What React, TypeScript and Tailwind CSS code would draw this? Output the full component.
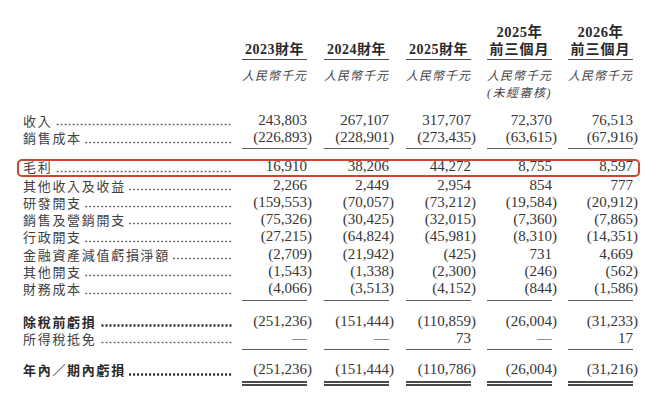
import React from "react";

const serif = "font-['Liberation_Serif','Noto_Sans_CJK_TC',serif]";
const cjk = "font-['Noto_Sans_CJK_TC','Noto_Sans_CJK_SC',sans-serif]";

const colCls = [
  "w-[65px]",
  "ml-[17px] w-[65px]",
  "ml-[17px] w-[65px]",
  "ml-[16px] w-[65px]",
  "ml-[16px] w-[65px]",
];

function Val({ v }: { v: string }) {
  if (v.endsWith(")")) {
    return (
      <>
        {v.slice(0, -1)}
        <span className="inline-block w-0">)</span>
      </>
    );
  }
  return <>{v}</>;
}

type RowProps = {
  label: string;
  vals: string[];
  bold?: boolean;
  line?: "single" | "double";
  pb?: string;
  className?: string;
};

function Row({ label, vals, bold, line, pb = "pb-[2px]", className = "" }: RowProps) {
  const lineCls =
    line === "single"
      ? `border-b border-[#5c5c5c] ${pb}`
      : line === "double"
      ? `border-b-[5px] border-double border-[#4a4a4a] ${pb}`
      : "";
  return (
    <div className={`flex items-start leading-[17.3px] ${className}`}>
      <div className="flex w-[219px] shrink-0 pr-[10px] h-[17.3px]">
        <span
          className={`${cjk} text-[13px] tracking-[1.7px] whitespace-nowrap ${
            bold ? "font-bold text-[#2a2a2a]" : "text-[#404040]"
          }`}
        >
          {label}
        </span>
        <div
          className={`flex-1 ml-[3px] self-end mb-[3px] h-[3px] bg-repeat-x bg-right bg-[length:4px_3px] ${
            bold
              ? "bg-[radial-gradient(circle,#2a2a2a_1px,transparent_1.4px)]"
              : "bg-[radial-gradient(circle,#666_0.8px,transparent_1.2px)]"
          }`}
        />
      </div>
      {vals.map((v, i) => (
        <div
          key={i}
          className={`${colCls[i]} shrink-0 text-right ${serif} text-[15px] text-[#363636] whitespace-nowrap ${lineCls}`}
        >
          <Val v={v} />
        </div>
      ))}
    </div>
  );
}

export default function App() {
  return (
    <div className="w-[666px] h-[414px] bg-white overflow-hidden">
      <div className="w-[633px] pl-[23px] pt-[23px]">
        {/* Header line A */}
        <div className="flex h-[18px] leading-[18px]">
          <div className="w-[219px] shrink-0" />
          {["", "", "", "2025年", "2026年"].map((t, i) => (
            <div
              key={i}
              className={`${colCls[i]} shrink-0 text-center whitespace-nowrap ${serif} font-bold text-[14.5px] text-[#2a2a2a] tracking-[0.5px]`}
            >
              {t}
            </div>
          ))}
        </div>
        {/* Header line B */}
        <div className="flex leading-[18px]">
          <div className="w-[219px] shrink-0" />
          {["2023財年", "2024財年", "2025財年", "前三個月", "前三個月"].map((t, i) => (
            <div
              key={i}
              className={`${colCls[i]} shrink-0 h-[19px] text-center whitespace-nowrap ${serif} font-bold text-[14px] text-[#2a2a2a] border-b border-[#4a4a4a] ${
                i >= 3 ? "tracking-[1px]" : "tracking-[0.5px]"
              }`}
            >
              {t}
            </div>
          ))}
        </div>
        {/* Header line C */}
        <div className="flex mt-[6px] h-[17px] leading-[17px]">
          <div className="w-[219px] shrink-0" />
          {[0, 1, 2, 3, 4].map((i) => (
            <div
              key={i}
              className={`${colCls[i]} shrink-0 text-center whitespace-nowrap ${cjk} italic text-[12px] tracking-[1px] text-[#444]`}
            >
              人民幣千元
            </div>
          ))}
        </div>
        {/* Header line D */}
        <div className="flex mt-[1px] h-[18px] leading-[18px]">
          <div className="w-[219px] shrink-0" />
          {["", "", "", "(未經審核)", ""].map((t, i) => (
            <div
              key={i}
              className={`${colCls[i]} shrink-0 text-center whitespace-nowrap ${serif} italic text-[12px] tracking-[1.5px] text-[#444]`}
            >
              {t}
            </div>
          ))}
        </div>

        {/* Body */}
        <div className="mt-[10px]">
          <Row label="收入" vals={["243,803", "267,107", "317,707", "72,370", "76,513"]} />
          <Row
            label="銷售成本"
            vals={["(226,893)", "(228,901)", "(273,435)", "(63,615)", "(67,916)"]}
            line="single"
            pb="pb-[1px]"
          />
          <div className="-ml-[6px] -mr-[7px] mt-[10px] border-2 border-[#c9472c] rounded-[5px] pl-[4px] pr-[5px] h-[18px] flex items-center">
            <Row
              label="毛利"
              vals={["16,910", "38,206", "44,272", "8,755", "8,597"]}
              className="-mt-[1px]"
            />
          </div>
          <Row label="其他收入及收益" vals={["2,266", "2,449", "2,954", "854", "777"]} />
          <Row label="研發開支" vals={["(159,553)", "(70,057)", "(73,212)", "(19,584)", "(20,912)"]} />
          <Row label="銷售及營銷開支" vals={["(75,326)", "(30,425)", "(32,015)", "(7,360)", "(7,865)"]} />
          <Row label="行政開支" vals={["(27,215)", "(64,824)", "(45,981)", "(8,310)", "(14,351)"]} />
          <Row label="金融資產減值虧損淨額" vals={["(2,709)", "(21,942)", "(425)", "731", "4,669"]} />
          <Row label="其他開支" vals={["(1,543)", "(1,338)", "(2,300)", "(246)", "(562)"]} />
          <Row
            label="財務成本"
            vals={["(4,066)", "(3,513)", "(4,152)", "(844)", "(1,586)"]}
            line="single"
          />
          <Row
            label="除稅前虧損"
            vals={["(251,236)", "(151,444)", "(110,859)", "(26,004)", "(31,233)"]}
            bold
            className="mt-[12px]"
          />
          <Row label="所得稅抵免" vals={["—", "—", "73", "—", "17"]} line="single" />
          <Row
            label="年內／期內虧損"
            vals={["(251,236)", "(151,444)", "(110,786)", "(26,004)", "(31,216)"]}
            bold
            line="double"
            className="mt-[11px]"
          />
        </div>
      </div>
    </div>
  );
}
